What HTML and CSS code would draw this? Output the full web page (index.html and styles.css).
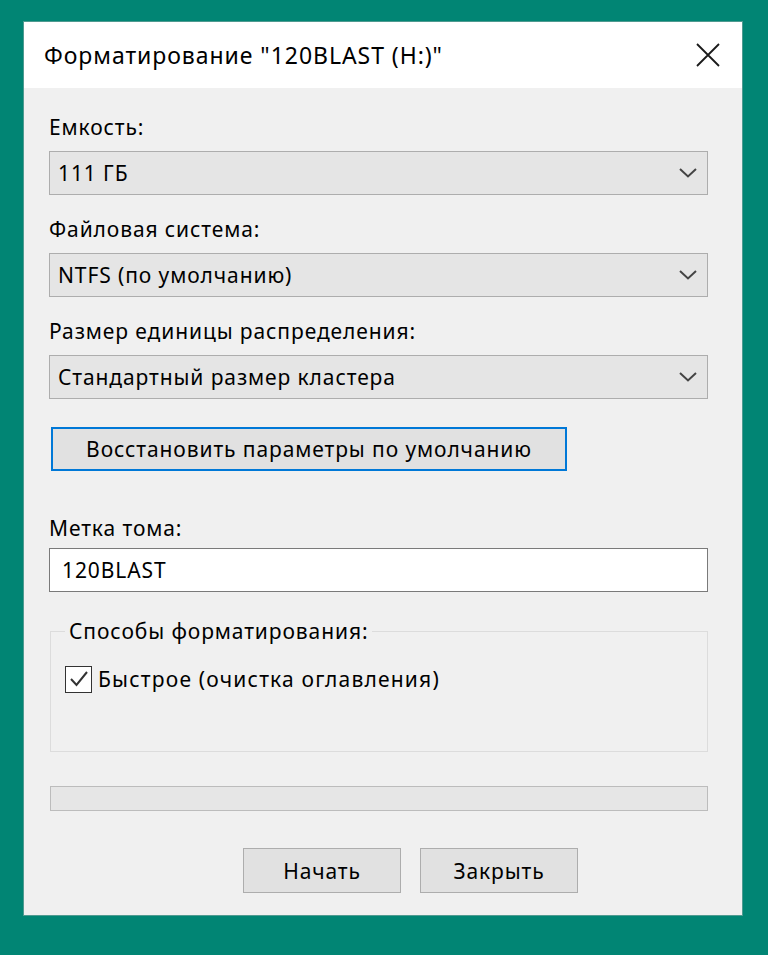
FILE: index.html
```html
<!DOCTYPE html>
<html lang="ru">
<head>
<meta charset="utf-8">
<title>Форматирование</title>
<link rel="stylesheet" href="styles.css">
</head>
<body>
<div class="dialog">
  <div class="titlebar">
    <span class="title">Форматирование "120BLAST (H:)"</span>
    <svg class="close" width="24" height="24" viewBox="0 0 24 24"><path d="M1 1 L23 23 M23 1 L1 23" stroke="#1a1a1a" stroke-width="1.8" fill="none"/></svg>
  </div>
  <div class="content">
    <div class="label">Емкость:</div>
    <div class="combo"><span>111 ГБ</span><svg class="chev" width="18" height="10" viewBox="0 0 18 10"><path d="M1 1 L9 8.5 L17 1" stroke="#444" stroke-width="2" fill="none"/></svg></div>
    <div class="label gap">Файловая система:</div>
    <div class="combo"><span>NTFS (по умолчанию)</span><svg class="chev" width="18" height="10" viewBox="0 0 18 10"><path d="M1 1 L9 8.5 L17 1" stroke="#444" stroke-width="2" fill="none"/></svg></div>
    <div class="label gap">Размер единицы распределения:</div>
    <div class="combo"><span>Стандартный размер кластера</span><svg class="chev" width="18" height="10" viewBox="0 0 18 10"><path d="M1 1 L9 8.5 L17 1" stroke="#444" stroke-width="2" fill="none"/></svg></div>
    <div class="btn restore">Восстановить параметры по умолчанию</div>
    <div class="label label-vol">Метка тома:</div>
    <div class="textbox">120BLAST</div>
    <fieldset class="group">
      <legend>Способы форматирования:</legend>
      <div class="check-row">
        <span class="checkbox"><svg width="22" height="22" viewBox="0 0 22 22"><path d="M3 11 L8.5 17 L19 4" stroke="#333" stroke-width="2" fill="none"/></svg></span>
        <span class="check-label">Быстрое (очистка оглавления)</span>
      </div>
    </fieldset>
    <div class="progress"></div>
    <div class="actions">
      <div class="btn action">Начать</div>
      <div class="btn action">Закрыть</div>
    </div>
  </div>
</div>
</body>
</html>
```

FILE: styles.css
```css
* { box-sizing: border-box; }
html, body { margin: 0; padding: 0; }
body {
  background: #018574;
  width: 768px;
  height: 955px;
  padding: 22px 0 0 24px;
  font-family: "Noto Sans", "Open Sans", sans-serif;
  font-size: 21px;
  letter-spacing: 0.9px;
  color: #000;
}
.dialog {
  width: 718px;
  height: 893px;
  background: #f0f0f0;
  display: flex;
  flex-direction: column;
  box-shadow: 0 0 0 1px #4f9a90;
}
.titlebar {
  height: 66px;
  background: #fff;
  display: flex;
  align-items: center;
  justify-content: space-between;
  padding: 0 22px 0 20px;
}
.title {
  line-height: 30px;
  font-size: 23px;
  letter-spacing: 0.95px;
}
.close { display: block; }
.content {
  padding: 24px 34px 0 25px;
  display: flex;
  flex-direction: column;
}
.label {
  line-height: 30px;
  height: 30px;
  margin-bottom: 9px;
}
.label.gap { margin-top: 19px; }
.combo {
  height: 44px;
  background: #e5e5e5;
  border: 1px solid #adadad;
  display: flex;
  align-items: center;
  justify-content: space-between;
  padding: 0 10px 0 8px;
}
.chev { display: block; }
.btn {
  background: #e1e1e1;
  border: 1px solid #adadad;
  display: flex;
  align-items: center;
  justify-content: center;
}
.restore {
  margin-top: 28px;
  margin-left: 2px;
  width: 516px;
  height: 44px;
  border: 2px solid #0078d7;
}
.label-vol { margin-top: 42px; margin-bottom: 5px; }
.textbox {
  height: 44px;
  background: #fff;
  border: 1px solid #7a7a7a;
  display: flex;
  align-items: center;
  padding: 0 12px;
}
.group {
  margin: 24px 0 0 1px;
  padding: 18px 14px 0 14px;
  border: 1px solid #dcdcdc;
  height: 136px;
  min-width: 0;
}
.group legend {
  padding: 0 4px;
  margin-left: 0;
  line-height: 30px;
}
.check-row {
  display: flex;
  align-items: center;
  gap: 6px;
  height: 30px;
}
.check-label { letter-spacing: 1.2px; }
.checkbox {
  width: 27px;
  height: 27px;
  border: 1.5px solid #333;
  background: #fff;
  display: flex;
  align-items: center;
  justify-content: center;
}
.checkbox svg { display: block; }
.progress {
  margin: 34px 0 0 1px;
  height: 25px;
  background: #e6e6e6;
  border: 1px solid #bcbcbc;
}
.actions {
  margin-top: 37px;
  padding-left: 194px;
  display: flex;
  gap: 19px;
}
.action {
  width: 158px;
  height: 45px;
}
```
